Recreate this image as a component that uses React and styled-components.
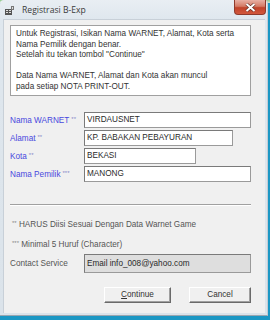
import React from "react";
import styled, { createGlobalStyle } from "styled-components";

const Global = createGlobalStyle`
  html, body { margin: 0; padding: 0; }
  body {
    width: 270px; height: 320px; overflow: hidden;
    background: #1b97c4;
    font-family: "Liberation Sans", Arial, sans-serif;
  }
`;

const Desktop = styled.div`
  width: 270px;
  height: 320px;
  background: linear-gradient(180deg, #8fc98a 0, #cfe6d2 3px, #1b97c4 3px);
`;

const Window = styled.div`
  width: 268px;
  height: 316px;
  background: linear-gradient(180deg, #e9eef3 0%, #dfe7ee 20px, #dbe3ea 100%);
  border-radius: 4px 4px 0 0;
  display: flex;
  flex-direction: column;
  box-sizing: border-box;
  border-right: 1px solid #c3ccd4;
  border-bottom: 1px solid #9aa6b0;
`;

const TitleBar = styled.div`
  height: 19px;
  display: flex;
  align-items: flex-start;
  padding-left: 5px;
  box-sizing: border-box;
`;

const TitleIcon = styled.svg`
  margin-top: 6px;
  width: 10px;
  height: 9px;
  flex: none;
`;

const TitleText = styled.span`
  margin-left: 7px;
  margin-top: 5px;
  font-family: "Open Sans", "Noto Sans", sans-serif;
  font-size: 8.6px;
  line-height: 11px;
  color: #3a3a3a;
`;

const CloseButton = styled.div`
  margin-left: auto;
  margin-right: 1px;
  width: 32px;
  height: 15px;
  border-radius: 0 0 4px 4px;
  background: linear-gradient(180deg, #e8b0a4 0%, #d47b66 45%, #c0432a 55%, #d2593e 100%);
  border: 1px solid #8f3a2c;
  border-top: none;
  box-sizing: border-box;
  display: flex;
  align-items: center;
  justify-content: center;
`;

const Body = styled.div`
  flex: 1;
  margin: 0 2px 2px 3px;
  background: #f0f0f0;
  padding: 5px 14px 0 6px;
  display: flex;
  flex-direction: column;
  border-top: 1px solid #c8d0d8;
  border-left: 1px solid #c8d0d8;
  box-sizing: border-box;
`;

const InfoBox = styled.div`
  height: 71px;
  background: #ffffff;
  border: 1px solid #a0a0a0;
  padding: 3px 5px;
  box-sizing: border-box;
  font-size: 8.2px;
  line-height: 10.6px;
  color: #333;
`;

const Line = styled.div`
  height: 10.6px;
  white-space: nowrap;
`;

const Form = styled.div`
  margin-top: 16px;
  display: flex;
  flex-direction: column;
  gap: 2px;
`;

const Row = styled.div`
  display: flex;
  align-items: center;
  height: ${(p) => p.h || 16}px;
`;

const Label = styled.span`
  width: 74px;
  flex: none;
  font-size: 8.2px;
  color: ${(p) => (p.blue ? "#4848de" : "#555")};
  white-space: nowrap;
`;

const Stars = styled.span`
  font-size: 6px;
  vertical-align: 2px;
  margin-left: 2px;
  color: ${(p) => p.c || "inherit"};
`;

const Input = styled.div`
  width: ${(p) => p.w}px;
  height: ${(p) => p.h || 16}px;
  box-sizing: border-box;
  border: 1px solid #7a7a7a;
  border-right-color: #9a9a9a;
  border-bottom-color: #9a9a9a;
  background: ${(p) => (p.disabled ? "#dedede" : "#ffffff")};
  font-size: 8.2px;
  line-height: ${(p) => (p.h || 16) - 2}px;
  padding-left: 2px;
  color: #2a2a2a;
  white-space: nowrap;
  overflow: hidden;
`;

const Separator = styled.div`
  margin-top: 22px;
  height: 0;
  border-top: 1px solid #a0a0a0;
  border-bottom: 1px solid #ffffff;
`;

const Note = styled.div`
  margin-top: ${(p) => p.mt}px;
  font-size: 8.2px;
  line-height: 11px;
  color: #555;
  white-space: nowrap;
`;

const ContactRow = styled.div`
  margin-top: 4px;
  display: flex;
  align-items: center;
`;

const Buttons = styled.div`
  margin-top: 14px;
  display: flex;
  justify-content: flex-end;
  gap: 18px;
`;

const Button = styled.div`
  width: ${(p) => p.w}px;
  height: 16px;
  box-sizing: border-box;
  background: #f0f0f0;
  border: 1px solid;
  border-color: #ffffff #6a6a6a #6a6a6a #ffffff;
  box-shadow: inset -1px -1px 0 #a0a0a0;
  font-size: 8.2px;
  line-height: 14px;
  text-align: center;
  color: #333;
`;

const Access = styled.span`
  text-decoration: underline;
`;

export default function App() {
  return (
    <Desktop>
      <Global />
      <Window>
        <TitleBar>
          <TitleIcon viewBox="0 0 10 9">
            <rect x="0" y="3" width="7" height="6" fill="#555" />
            <rect x="1" y="4" width="2" height="1" fill="#ddd" />
            <rect x="1" y="6" width="2" height="1" fill="#ddd" />
            <rect x="4" y="4" width="2" height="1" fill="#ddd" />
            <rect x="4" y="6" width="2" height="1" fill="#ddd" />
            <rect x="6" y="0" width="3" height="4" fill="#777" />
            <rect x="7" y="1" width="1" height="2" fill="#ddd" />
          </TitleIcon>
          <TitleText>Registrasi B-Exp</TitleText>
          <CloseButton>
            <svg width="11" height="9" viewBox="0 0 11 9">
              <path d="M1.5 1 L9.5 8 M9.5 1 L1.5 8" stroke="#5a2a22" strokeWidth="3.2" />
              <path d="M1.5 1 L9.5 8 M9.5 1 L1.5 8" stroke="#ffffff" strokeWidth="2" />
            </svg>
          </CloseButton>
        </TitleBar>
        <Body>
          <InfoBox>
            <Line>Untuk Registrasi, Isikan Nama WARNET, Alamat, Kota serta</Line>
            <Line>Nama Pemilik dengan benar.</Line>
            <Line>Setelah itu tekan tombol "Continue"</Line>
            <Line />
            <Line>Data Nama WARNET, Alamat dan Kota akan muncul</Line>
            <Line>pada setiap NOTA PRINT-OUT.</Line>
          </InfoBox>
          <Form>
            <Row>
              <Label blue>Nama WARNET<Stars c="#8888c8">**</Stars></Label>
              <Input w={168}>VIRDAUSNET</Input>
            </Row>
            <Row>
              <Label blue>Alamat<Stars c="#8888c8">**</Stars></Label>
              <Input w={149}>KP. BABAKAN PEBAYURAN</Input>
            </Row>
            <Row>
              <Label blue>Kota<Stars c="#8888c8">**</Stars></Label>
              <Input w={112}>BEKASI</Input>
            </Row>
            <Row>
              <Label blue>Nama Pemilik<Stars c="#8888c8">***</Stars></Label>
              <Input w={168}>MANONG</Input>
            </Row>
          </Form>
          <Separator />
          <Note mt={12}><Stars c="#888">**</Stars> HARUS Diisi Sesuai Dengan Data Warnet Game</Note>
          <Note mt={8}><Stars c="#888">***</Stars> Minimal 5 Huruf (Character)</Note>
          <ContactRow>
            <Label>Contact Service</Label>
            <Input w={169} h={19} disabled>Email info_008@yahoo.com</Input>
          </ContactRow>
          <Buttons>
            <Button w={67}><Access>C</Access>ontinue</Button>
            <Button w={62}>Cancel</Button>
          </Buttons>
        </Body>
      </Window>
    </Desktop>
  );
}
